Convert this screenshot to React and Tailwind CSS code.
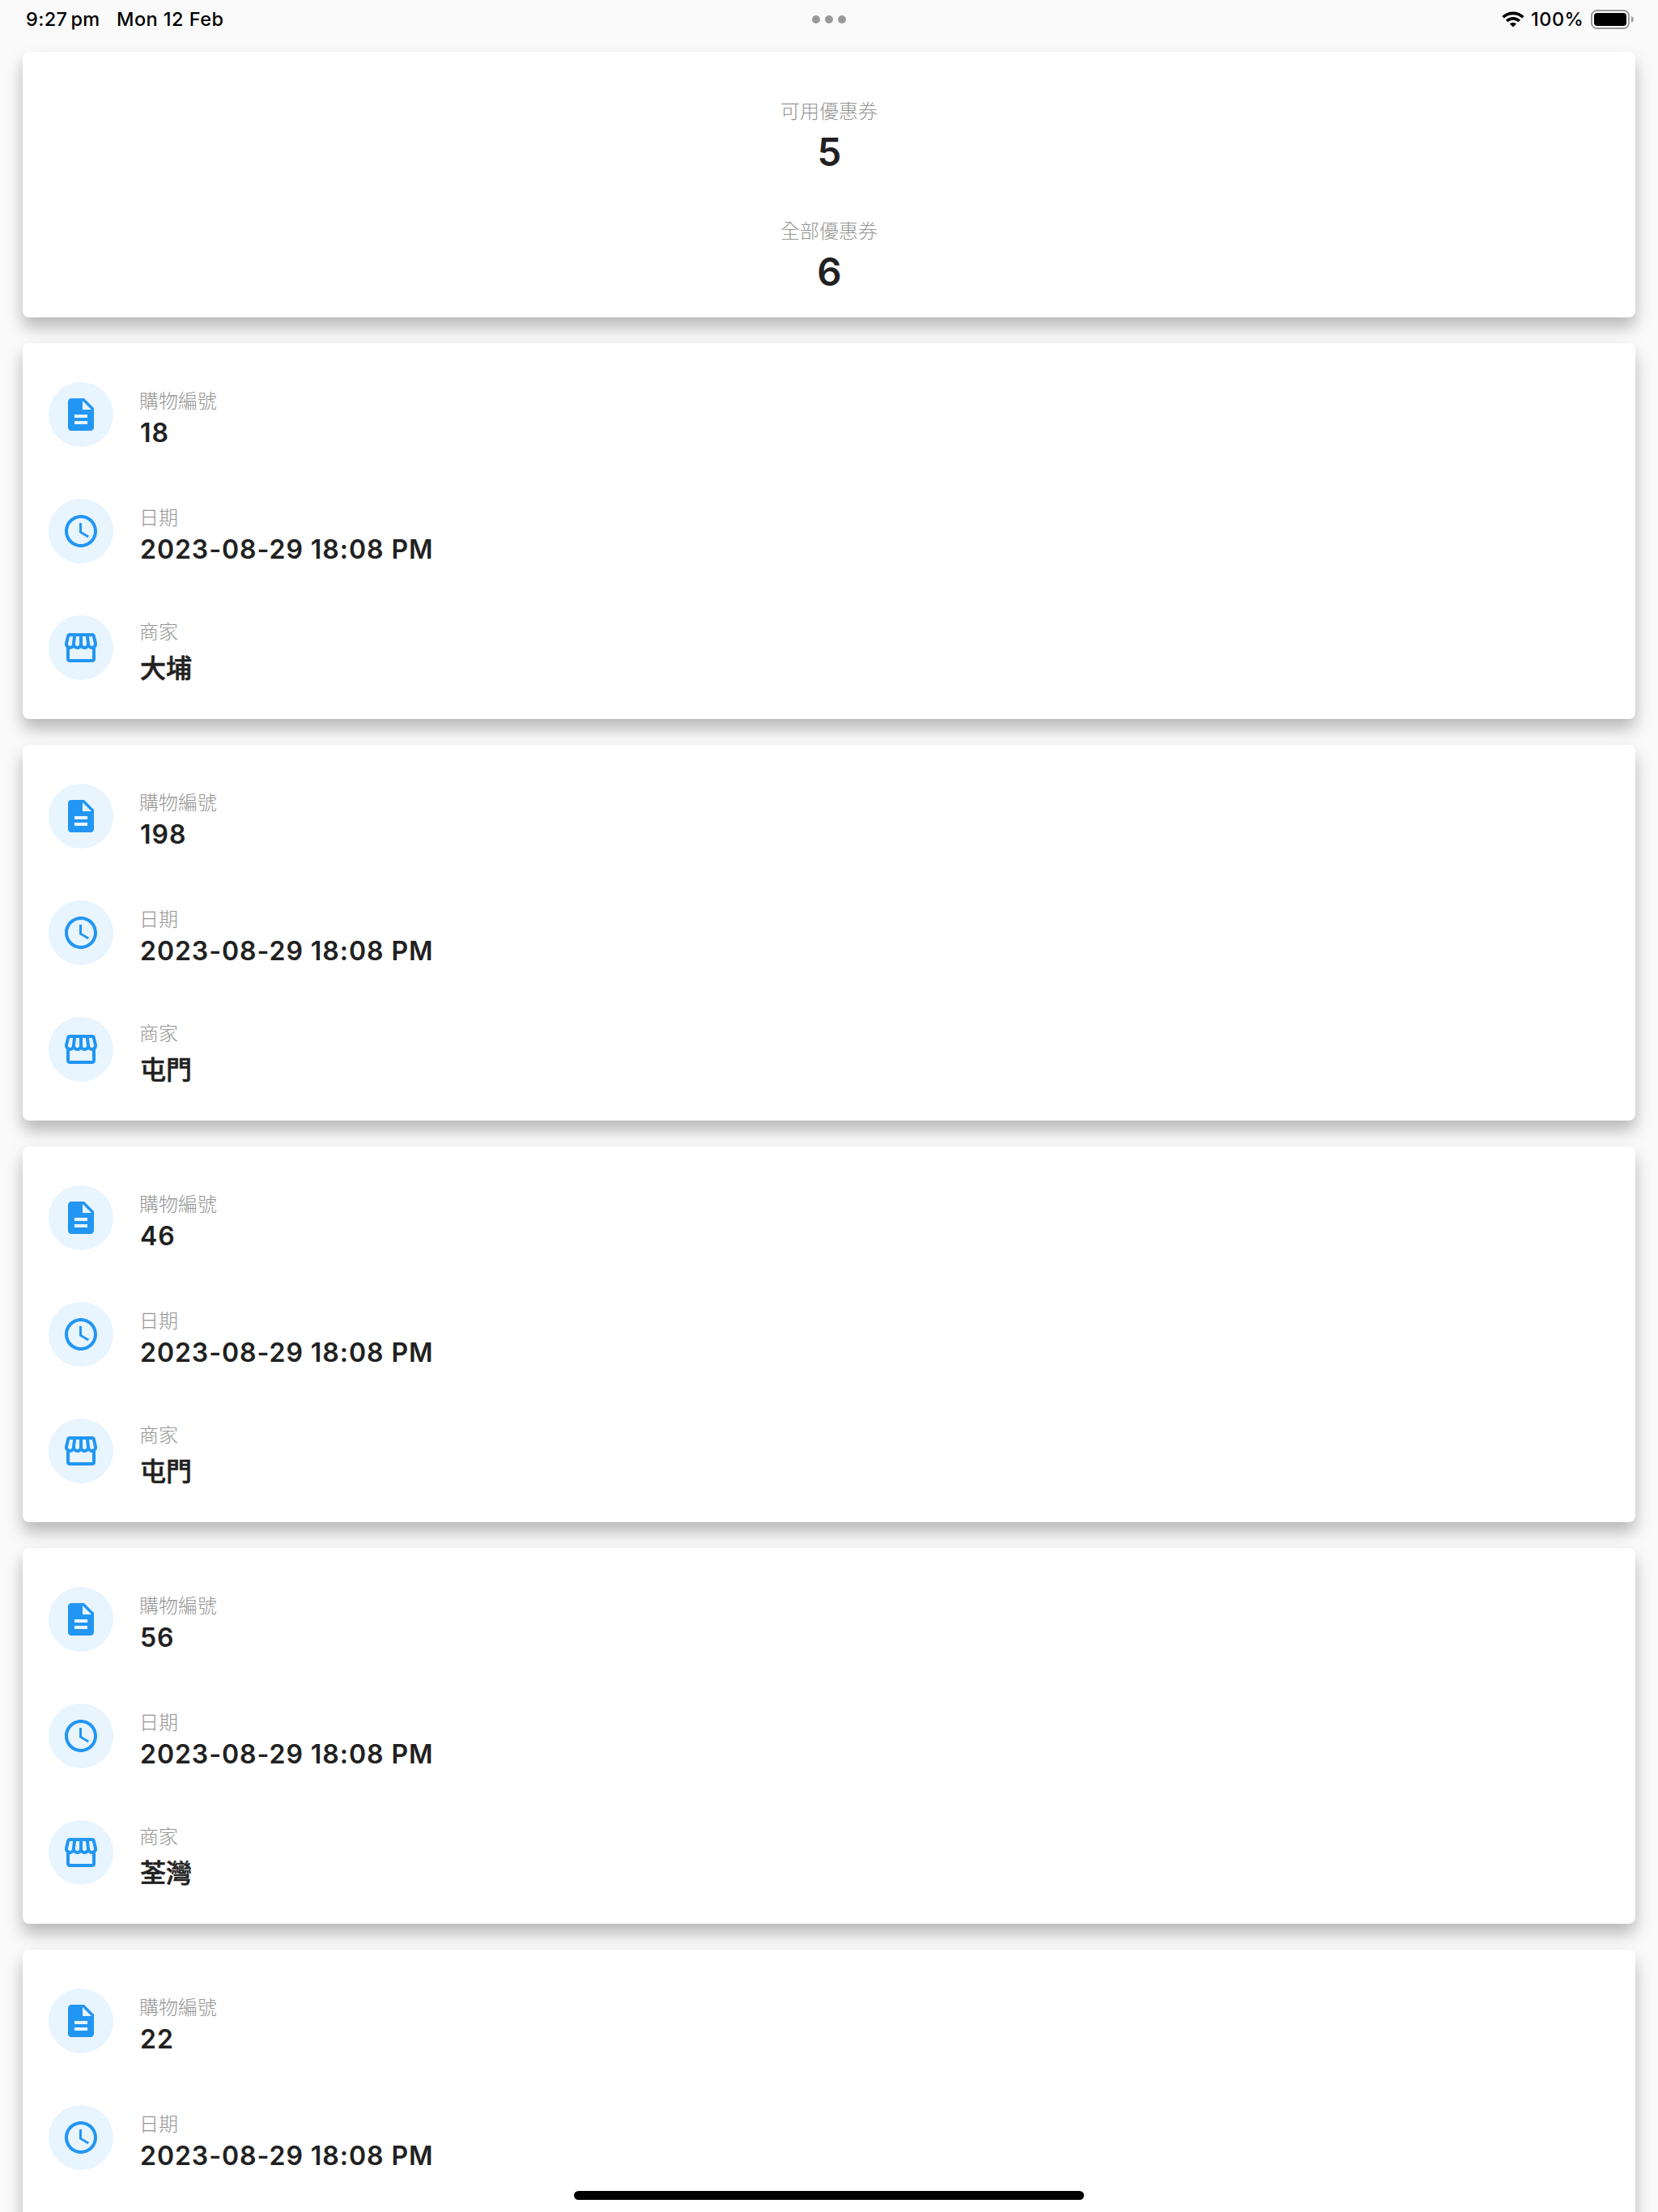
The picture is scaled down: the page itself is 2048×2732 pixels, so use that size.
import React from "react";
import { MdDescription, MdAccessTime, MdOutlineStorefront } from "react-icons/md";

const records = [
  { id: "18", date: "2023-08-29 18:08 PM", shop: "大埔" },
  { id: "198", date: "2023-08-29 18:08 PM", shop: "屯門" },
  { id: "46", date: "2023-08-29 18:08 PM", shop: "屯門" },
  { id: "56", date: "2023-08-29 18:08 PM", shop: "荃灣" },
  { id: "22", date: "2023-08-29 18:08 PM" },
];

const cardClass = "shrink-0 rounded-[8px] bg-white shadow-[0_12px_20px_0_rgba(0,0,0,0.27)]";

function StatusBar() {
  return (
    <header className="grid h-[64px] shrink-0 grid-cols-3 px-8 text-[23.5px] leading-[48px] font-medium text-black">
      <div className="flex h-12 items-center">
        <span className="w-[112px] tracking-[0.4px] whitespace-nowrap">
          9:27<span className="ml-[4px]">pm</span>
        </span>
        <span className="tracking-[0.45px] whitespace-nowrap">Mon 12 Feb</span>
      </div>
      <div className="flex h-12 items-center justify-center gap-[6px]">
        <span className="size-[10px] rounded-full bg-[#999999]" />
        <span className="size-[10px] rounded-full bg-[#999999]" />
        <span className="size-[10px] rounded-full bg-[#999999]" />
      </div>
      <div className="flex h-12 items-center justify-end">
        <svg className="mr-[8px] h-[20px] w-[28px]" viewBox="0 0 28 20" fill="none">
          <path d="M1.6 7.3C8.4 0.6 19.6 0.6 26.4 7.3" stroke="#000" strokeWidth="3.7" />
          <path d="M6.2 12C10.6 7.8 17.4 7.8 21.8 12" stroke="#000" strokeWidth="3.6" />
          <path d="M14 19.6L9.9 15.6C12.2 13.6 15.8 13.6 18.1 15.6Z" fill="#000" />
        </svg>
        <span className="w-[67px] tracking-[0.5px] whitespace-nowrap">100%</span>
        <svg className="-mr-[2px] ml-[7px] h-[24px] w-[53px]" viewBox="0 0 53 24" fill="none">
          <rect x="1" y="1" width="46" height="22" rx="6.5" stroke="#999" strokeWidth="2" />
          <rect x="4" y="4" width="40" height="16" rx="4" fill="#000" />
          <path d="M50 8C51.6 8.6 52.8 10 52.8 12C52.8 14 51.6 15.4 50 16Z" fill="#999" />
        </svg>
      </div>
    </header>
  );
}

function Total({ label, value }) {
  return (
    <div className="flex flex-col items-center">
      <span className="h-[36px] text-[24px] leading-[36px] font-light text-[#959595]">{label}</span>
      <span className="h-[64px] pl-px text-[47.5px] leading-[64px] font-semibold text-[#212121]">{value}</span>
    </div>
  );
}

function Field({ icon: Icon, label, value, cjk }) {
  return (
    <div className="flex h-20 gap-8">
      <span className="flex size-20 items-center justify-center rounded-full bg-[#e8f4fe]">
        <Icon className="size-12 text-[#2196f3]" />
      </span>
      <span className={cjk ? "flex flex-col pt-[3px]" : "flex flex-col pt-[6px]"}>
        <span className="h-[36px] text-[24px] leading-[36px] font-light text-[#959595]">{label}</span>
        {cjk ? (
          <span className="h-[52px] pl-px text-[32px] leading-[53px] font-medium text-[#212121] [-webkit-text-stroke:0.6px_#212121]">
            {value}
          </span>
        ) : (
          <span className="h-[42px] pl-px text-[32px] leading-[41px] font-semibold tracking-[0.95px] text-[#212121]">
            {value}
          </span>
        )}
      </span>
    </div>
  );
}

function RecordCard({ record }) {
  return (
    <article className={`${cardClass} flex h-[464px] flex-col gap-16 px-8 pt-12`}>
      <Field icon={MdDescription} label="購物編號" value={record.id} />
      <Field icon={MdAccessTime} label="日期" value={record.date} />
      {record.shop && <Field icon={MdOutlineStorefront} label="商家" value={record.shop} cjk />}
    </article>
  );
}

export default function App() {
  return (
    <div className="relative flex h-[2732px] w-[2048px] flex-col overflow-hidden bg-[#fafafa] font-['Inter','Noto_Sans_CJK_TC',sans-serif]">
      <StatusBar />
      <main className="flex flex-col gap-8 px-7">
        <section className={`${cardClass} flex h-[328px] flex-col items-center gap-12 pt-[56px]`}>
          <Total label="可用優惠券" value="5" />
          <Total label="全部優惠券" value="6" />
        </section>
        {records.map((record) => (
          <RecordCard key={record.id} record={record} />
        ))}
      </main>
      <div className="absolute bottom-[15px] left-[709px] h-[11px] w-[630px] rounded-full bg-black" />
    </div>
  );
}
